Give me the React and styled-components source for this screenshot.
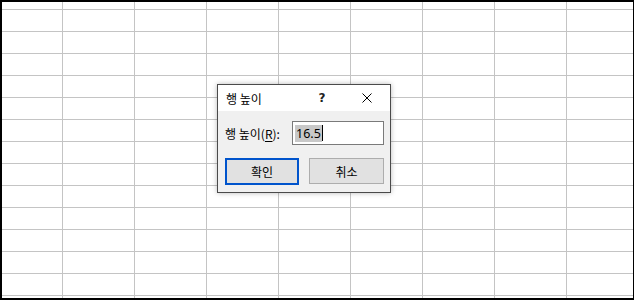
import React from "react";
import styled, { createGlobalStyle } from "styled-components";

const Global = createGlobalStyle`
  html, body { margin: 0; padding: 0; background: #fff; }
  body { font-family: "Noto Sans CJK KR", "Noto Sans", sans-serif; }
  * { box-sizing: border-box; }
`;

const Frame = styled.div`
  position: relative;
  width: 634px;
  height: 300px;
  border: 2px solid #000;
  border-right-width: 1px;
  background-color: #fff;
  background-image:
    linear-gradient(to right, transparent 71px, #c4c4c4 71px, #c4c4c4 72px),
    linear-gradient(to bottom, transparent 21px, #c4c4c4 21px, #c4c4c4 22px);
  background-size: 72px 100%, 100% 22px;
  background-position: 61px 0, 0 8px;
  overflow: hidden;
`;

const Dialog = styled.div`
  position: absolute;
  left: 215px;
  top: 82px;
  width: 174px;
  height: 109px;
  border: 1px solid #4a4a4a;
  background: #f0f0f0;
  box-shadow: 0 0 5px rgba(0, 0, 0, 0.28);
  display: flex;
  flex-direction: column;
`;

const TitleBar = styled.div`
  height: 28px;
  background: #fff;
  display: flex;
  align-items: center;
  padding-left: 8px;
  font-size: 12px;
  color: #000;
`;

const Title = styled.span`
  flex: 1;
  line-height: 1;
  padding-top: 1px;
`;

const Help = styled.span`
  width: 12px;
  margin-right: 34px;
  font-family: "DejaVu Sans", sans-serif;
  font-size: 12px;
  font-weight: bold;
  text-align: center;
  color: #222;
`;

const Close = styled.span`
  width: 10px;
  height: 10px;
  margin-right: 18px;
  display: flex;
`;

const Body = styled.div`
  flex: 1;
  display: flex;
  flex-direction: column;
  padding: 10px 6px 7px 7px;
  gap: 13px;
`;

const FieldRow = styled.div`
  display: flex;
  align-items: center;
  justify-content: space-between;
  height: 24px;
`;

const Label = styled.span`
  font-size: 12px;
  color: #000;
  white-space: nowrap;
`;

const Key = styled.span`
  text-decoration: underline;
  text-underline-offset: 2px;
`;

const Input = styled.div`
  width: 92px;
  height: 24px;
  border: 1px solid #7a7a7a;
  background: #fff;
  display: flex;
  align-items: center;
  padding-left: 2px;
`;

const Selected = styled.span`
  background: #c8c8c8;
  font-family: "Noto Sans", sans-serif;
  font-size: 12.5px;
  line-height: 17px;
  height: 17px;
  padding: 0 1px;
  color: #000;
`;

const Caret = styled.span`
  width: 1px;
  height: 16px;
  background: #000;
`;

const ButtonRow = styled.div`
  display: flex;
  justify-content: space-between;
  align-items: flex-start;
`;

const Button = styled.div`
  width: ${(p) => (p.$primary ? "74px" : "75px")};
  height: ${(p) => (p.$primary ? "27px" : "26px")};
  border: ${(p) => (p.$primary ? "2px solid #0054cc" : "1px solid #adadad")};
  background: #e1e1e1;
  display: flex;
  align-items: center;
  justify-content: center;
  font-size: 12px;
  color: #000;
`;

export default function App() {
  return (
    <>
      <Global />
      <Frame>
        <Dialog>
          <TitleBar>
            <Title>행 높이</Title>
            <Help>?</Help>
            <Close>
              <svg width="10" height="10" viewBox="0 0 10 10">
                <path d="M0.5 0.5L9.5 9.5M9.5 0.5L0.5 9.5" stroke="#000" strokeWidth="1" />
              </svg>
            </Close>
          </TitleBar>
          <Body>
            <FieldRow>
              <Label>
                행 높이(<Key>R</Key>):
              </Label>
              <Input>
                <Selected>16.5</Selected>
                <Caret />
              </Input>
            </FieldRow>
            <ButtonRow>
              <Button $primary>확인</Button>
              <Button>취소</Button>
            </ButtonRow>
          </Body>
        </Dialog>
      </Frame>
    </>
  );
}
